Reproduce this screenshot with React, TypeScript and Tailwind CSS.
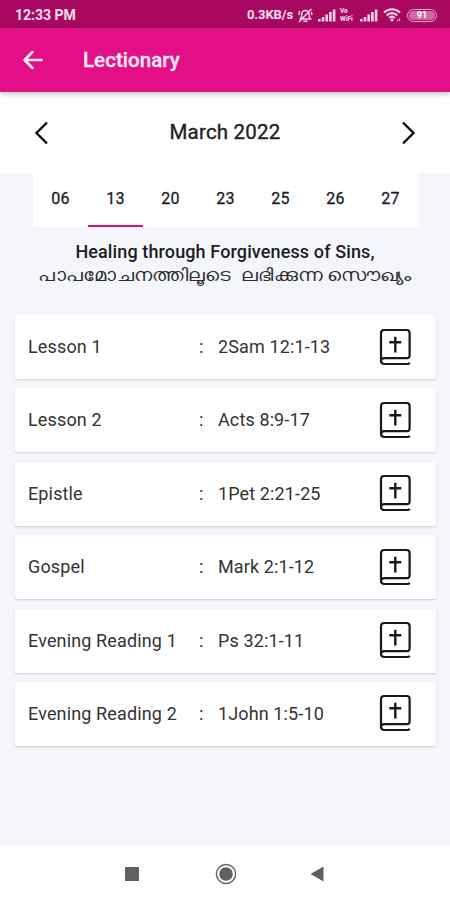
import React from "react";

const dates = ["06", "13", "20", "23", "25", "26", "27"];

const readings = [
  { label: "Lesson 1", verse: "2Sam 12:1-13" },
  { label: "Lesson 2", verse: "Acts 8:9-17" },
  { label: "Epistle", verse: "1Pet 2:21-25" },
  { label: "Gospel", verse: "Mark 2:1-12" },
  { label: "Evening Reading 1", verse: "Ps 32:1-11" },
  { label: "Evening Reading 2", verse: "1John 1:5-10" },
];

function Signal() {
  return (
    <svg width="18" height="13" viewBox="0 0 18 13" fill="#f7d3e8">
      <rect x="0" y="10" width="2.6" height="2.5" />
      <rect x="3.7" y="8" width="2.6" height="4.5" />
      <rect x="7.4" y="5.5" width="2.6" height="7" />
      <rect x="11.1" y="3" width="2.6" height="9.5" />
      <rect x="14.8" y="0.5" width="2.6" height="12" />
    </svg>
  );
}

function BellOff() {
  return (
    <svg width="15" height="15" viewBox="0 0 15 15" fill="none" stroke="#f7d3e8" strokeWidth="1.5" strokeLinecap="round">
      <path d="M2 11h10.5L11.2 9V6.2A3.8 3.8 0 0 0 3.6 6.2V9L2 11M6 13.3h3M1.5 13.5 13 1.5M1 6.5 1.5 3.5M13.8 6.5 13.6 4.5" />
    </svg>
  );
}

function Wifi() {
  return (
    <svg width="19" height="14" viewBox="0 0 19 14" fill="none" stroke="#f7d3e8" strokeWidth="2.1">
      <path d="M1 4.6C5.4 0.2 12.6 0.2 17 4.6M3.6 7.4c3-3 7.8-3 10.8 0M6.2 10c1.6-1.5 4-1.5 5.6 0" />
      <circle cx="9" cy="12" r="1.5" fill="#f7d3e8" stroke="none" />
      <path d="M14.5 13v-1.6M16.5 13v-2.6" strokeWidth="1.1" />
    </svg>
  );
}

function BibleIcon() {
  return (
    <svg width="33" height="38" viewBox="0 0 33 38" fill="none" stroke="#171a19" strokeWidth="2.2">
      <path d="M2 33.2V5.2Q2 2 5.2 2H27.6Q30.6 2 30.6 5V27.6Q30.6 30.2 28 30.2H5.5Q2 30.2 2 33Q2 36 5.5 36H28.2Q30 36 30.6 34.7" strokeLinejoin="round" />
      <path d="M16.3 8.7V24.4M10.3 14.2H22.3" strokeWidth="2.4" />
    </svg>
  );
}

export default function App() {
  return (
    <div className="flex h-[900px] w-[450px] flex-col overflow-hidden bg-[#f4f6fb] font-[Roboto,sans-serif] text-[#1d1d1f]">
      <div className="flex h-7 shrink-0 items-center justify-between bg-[#a80860] pt-[2px] pr-[13px] pl-[15px] text-[#fbe0ef]">
        <span className="text-[14px] font-bold">12:33 PM</span>
        <div className="flex items-center">
          <span className="mr-[3px] w-[48px] text-[13px] font-bold tracking-[-0.1px] whitespace-nowrap">0.3KB/s</span>
          <BellOff />
          <span className="ml-[5px]"><Signal /></span>
          <span className="ml-[4px] flex w-[17px] flex-col text-[6.5px] font-bold">
            <span className="leading-[8px]">Vo</span>
            <span className="leading-[8px]">WiFi</span>
          </span>
          <span className="ml-[3px]"><Signal /></span>
          <span className="ml-[5px]"><Wifi /></span>
          <span className="ml-[5px] flex h-[13px] w-[30px] items-center justify-center rounded-full border-[1.5px] border-[#f0a9d0] p-[1px]">
            <span className="flex h-full w-full items-center justify-center rounded-full bg-[#cf6ba3] text-[9px] leading-none font-bold text-white">91</span>
          </span>
        </div>
      </div>

      <header className="z-10 flex h-16 shrink-0 items-center bg-[#e20f86] pl-[22px] text-[#ffeaf5] shadow-[0_2px_5px_rgba(0,0,0,0.25)]">
        <svg width="22" height="22" viewBox="0 0 22 22" fill="none" stroke="currentColor" strokeWidth="2.5" strokeLinecap="round" strokeLinejoin="round">
          <path d="M19.5 11H2.5M10.5 3 2.5 11l8 8" />
        </svg>
        <h1 className="ml-[39px] text-[20.5px] font-medium tracking-[0.05px] [-webkit-text-stroke:0.3px_currentColor]">Lectionary</h1>
      </header>

      <div className="flex h-[81px] shrink-0 items-center justify-between bg-white px-[34px]">
        <svg width="15" height="24" viewBox="0 0 15 24" fill="none" stroke="#111" strokeWidth="2.4">
          <path d="M13 1.5 2.5 12 13 22.5" />
        </svg>
        <h2 className="text-[20.5px] tracking-[0.2px] text-[#222] [-webkit-text-stroke:0.35px_currentColor]">March 2022</h2>
        <svg width="15" height="24" viewBox="0 0 15 24" fill="none" stroke="#111" strokeWidth="2.4">
          <path d="M2 1.5 12.5 12 2 22.5" />
        </svg>
      </div>

      <div className="mr-8 ml-[33px] flex h-[54px] shrink-0 bg-white">
        {dates.map((d) => (
          <div
            key={d}
            className={
              "flex flex-1 items-center justify-center border-b-2 text-[16px] tracking-[0.2px] [-webkit-text-stroke:0.3px_currentColor] " +
              (d === "13" ? "border-[#cf1279]" : "border-transparent")
            }
          >
            {d}
          </div>
        ))}
      </div>

      <div className="mt-[14px] flex h-[74px] shrink-0 flex-col items-center whitespace-nowrap">
        <p className="text-[18px] leading-[22px] font-medium tracking-[0.12px]">Healing through Forgiveness of Sins,</p>
        <p className="scale-x-[1.152] text-[17px] leading-[24px] text-[#2c2c2e]">പാപമോചനത്തിലൂടെ &nbsp;ലഭിക്കുന്ന സൌഖ്യം</p>
      </div>

      <ul className="mr-[14px] ml-[15px] flex flex-1 flex-col gap-[9.4px]">
        {readings.map((r) => (
          <li key={r.label} className="flex h-16 shrink-0 items-center rounded-[2px] bg-white pr-[24px] pb-px pl-[13px] text-[18px] text-[#333] shadow-[0_1px_2px_rgba(0,0,0,0.16)]">
            <span className="w-[171px] tracking-[0.14px] whitespace-nowrap">{r.label}</span>
            <span className="w-[19px]">:</span>
            <span className="flex-1 tracking-[0.12px] whitespace-nowrap">{r.verse}</span>
            <BibleIcon />
          </li>
        ))}
      </ul>

      <nav className="flex h-[54px] shrink-0 items-center bg-white pt-px pl-[125px]">
        <div className="h-[14px] w-[14px] bg-[#606060]" />
        <svg className="ml-[76px]" width="22" height="22" viewBox="0 0 22 22">
          <circle cx="11" cy="11" r="9.6" fill="none" stroke="#666" strokeWidth="1.5" />
          <circle cx="11" cy="11" r="6.8" fill="#606060" />
        </svg>
        <svg className="ml-[73px]" width="14" height="16" viewBox="0 0 14 16" fill="#606060">
          <path d="M13.5 0.5v15L0.5 8z" />
        </svg>
      </nav>
    </div>
  );
}
